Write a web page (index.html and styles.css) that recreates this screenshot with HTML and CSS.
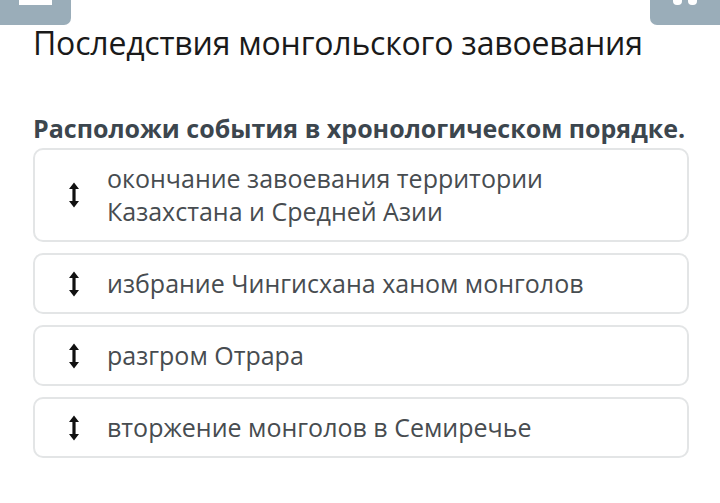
FILE: index.html
```html
<!DOCTYPE html>
<html lang="ru">

<head>
    <meta charset="UTF-8">
    <meta name="viewport" content="width=device-width, initial-scale=1.0">
    <title>Порядок событий</title>
    <link rel="stylesheet" href="styles.css">
</head>

<body>
    <div class="topBar">
        <div class="navBtn navLeft"><span class="bar"></span></div>
        <div class="navBtn navRight"><span class="dot"></span><span class="dot"></span></div>
    </div>

    <h1 class="title">Последствия монгольского завоевания</h1>

    <h2 class="task">Расположи события в хронологическом порядке.</h2>

    <div class="list">
        <div class="item">
            <span class="handle">
                <svg width="12" height="26" viewBox="0 0 12 26">
                    <path d="M6 4v18" stroke="#111" stroke-width="3.2" />
                    <path d="M6 0.5L11 7H1z M6 25.5L11 19H1z" fill="#111" />
                </svg>
            </span>
            <p class="text">окончание завоевания территории<br>Казахстана и Средней Азии</p>
        </div>
        <div class="item">
            <span class="handle">
                <svg width="12" height="26" viewBox="0 0 12 26">
                    <path d="M6 4v18" stroke="#111" stroke-width="3.2" />
                    <path d="M6 0.5L11 7H1z M6 25.5L11 19H1z" fill="#111" />
                </svg>
            </span>
            <p class="text">избрание Чингисхана ханом монголов</p>
        </div>
        <div class="item">
            <span class="handle">
                <svg width="12" height="26" viewBox="0 0 12 26">
                    <path d="M6 4v18" stroke="#111" stroke-width="3.2" />
                    <path d="M6 0.5L11 7H1z M6 25.5L11 19H1z" fill="#111" />
                </svg>
            </span>
            <p class="text">разгром Отрара</p>
        </div>
        <div class="item">
            <span class="handle">
                <svg width="12" height="26" viewBox="0 0 12 26">
                    <path d="M6 4v18" stroke="#111" stroke-width="3.2" />
                    <path d="M6 0.5L11 7H1z M6 25.5L11 19H1z" fill="#111" />
                </svg>
            </span>
            <p class="text">вторжение монголов в Семиречье</p>
        </div>
    </div>
</body>

</html>
```

FILE: styles.css
```css
body {
    font-family: 'Open Sans', 'Noto Sans', sans-serif;
    background-color: #fff;
    margin: 0;
    padding: 0;
    width: 720px;
    height: 503px;
    overflow: hidden;
}

.topBar {
    display: flex;
    justify-content: space-between;
    height: 25px;
}

.navBtn {
    background-color: #9aadb9;
    width: 71px;
    height: 25px;
    display: flex;
    justify-content: center;
}

.navLeft {
    border-bottom-right-radius: 7px;
}

.navRight {
    width: 70px;
    border-bottom-left-radius: 7px;
    gap: 6px;
}

.bar {
    display: block;
    width: 33px;
    height: 5px;
    background-color: #fff;
}

.dot {
    display: block;
    width: 9px;
    height: 5px;
    background-color: #fff;
    border-radius: 0 0 4px 4px;
}

.title {
    margin: 0 0 0 33px;
    font-size: 32px;
    font-weight: 400;
    line-height: 36px;
    color: #1a1a1a;
    letter-spacing: -0.2px;
}

.task {
    margin: 52px 0 0 33px;
    font-size: 25px;
    font-weight: 700;
    line-height: 30px;
    color: #3c464e;
}

.list {
    margin: 5px 31px 0 33px;
    display: flex;
    flex-direction: column;
    gap: 11px;
}

.item {
    display: flex;
    align-items: center;
    border: 2px solid #e3e5e6;
    border-radius: 10px;
    padding: 12px 0;
}

.handle {
    width: 66px;
    padding-left: 6px;
    display: flex;
    justify-content: center;
}

.text {
    margin: 0;
    font-size: 25px;
    line-height: 33px;
    color: #474c50;
}
```
